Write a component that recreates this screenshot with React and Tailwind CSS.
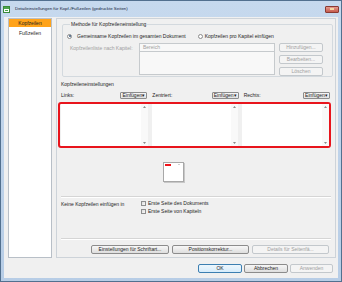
import clsx from 'clsx'

function Btn({ children, className, disabled, focused }) {
  return (
    <div
      className={clsx(
        'flex h-[9px] items-center justify-center rounded-[2px] border',
        disabled && 'border-[#c3c8cc] bg-[#f4f4f4] text-[#a0a0a0]',
        focused && 'border-[#3c7fb1] bg-linear-to-b from-[#eef7fd] to-[#d6ecfb]',
        !disabled && !focused && 'border-[#8c8c8c] bg-linear-to-b from-[#f7f7f7] to-[#dedede]',
        className
      )}
    >
      {children}
    </div>
  )
}

function Arrow({ up }) {
  return (
    <svg width="3" height="2" viewBox="0 0 3 2">
      <path d={up ? 'M0 2 L1.5 0 L3 2 Z' : 'M0 0 L1.5 2 L3 0 Z'} fill="#8a8a8a" />
    </svg>
  )
}

function TextBox() {
  return (
    <div className="flex h-[42px] flex-1 bg-white">
      <div className="flex-1" />
      <div className="flex w-[7px] flex-col items-center justify-between bg-[#f9f9f9] py-[2px]">
        <Arrow up />
        <Arrow />
      </div>
    </div>
  )
}

function ColHead({ label }) {
  return (
    <div className="flex h-[7px] flex-1 items-center">
      <span>{label}</span>
      <div className="ml-auto mr-[1px] flex h-[7px] w-[27px] items-center justify-center rounded-[1px] border border-[#8c8c8c] bg-linear-to-b from-[#f7f7f7] to-[#e2e2e2]">
        Einfügen▾
      </div>
    </div>
  )
}

export default function App() {
  return (
    <div className="flex h-[282px] w-[342px] flex-col overflow-hidden border border-[#52708f] bg-linear-to-b from-[#c6d9ee] to-[#b7cde6] font-['Liberation_Sans',sans-serif] text-[5px] leading-none text-[#1e1e1e]">
      {/* Title bar */}
      <div className="flex h-[16px] items-center pl-[2px] pr-[2px]">
        <svg width="7" height="7" viewBox="0 0 7 7">
          <rect x="0.5" y="0.5" width="6" height="6" fill="#fff" stroke="#3a8a3a" />
          <rect x="1" y="1" width="5" height="2" fill="#4ca64c" />
          <rect x="2" y="4" width="3" height="1" fill="#4ca64c" />
        </svg>
        <span className="ml-[5px] text-[4.4px] text-[#14233a]">Detaileinstellungen für Kopf-/Fußzeilen (gedruckte Seiten)</span>
        <div className="ml-auto flex h-[7px] w-[14px] items-center justify-center rounded-[1px] border border-[#8a3a32] bg-linear-to-b from-[#e49a8f] to-[#c55a4c]">
          <div className="h-[2px] w-[4px] bg-[#f5d7a0]" />
        </div>
      </div>

      {/* Client area */}
      <div className="mx-[3px] mb-[3px] flex flex-1 flex-col bg-[#f0f0f0] pl-[4px] pr-[2px] pt-[1px]">
        <div className="flex h-[240px] gap-[4px]">
          {/* Left list */}
          <div className="w-[44px] border border-[#b8bfc7] bg-white">
            <div className="flex h-[8px] items-center justify-center bg-[#ffa31a]">Kopfzeilen</div>
            <div className="mt-[2px] flex h-[8px] items-center justify-center">Fußzeilen</div>
          </div>

          {/* Panel */}
          <div className="flex w-[280px] flex-col border border-[#cdd3d9] px-[4px]">
            <fieldset className="ml-[1px] mt-[3px] w-[271px] rounded-[2px] border border-[#d3d9de] pl-[4px]">
              <legend className="ml-[3px] px-[1px]">Methode für Kopfzeileneinstellung</legend>
              <div className="mt-[6px] flex h-[6px] items-center">
                <div className="flex h-[5px] w-[5px] items-center justify-center rounded-full border border-[#8c8c8c] bg-white">
                  <div className="h-[2px] w-[2px] rounded-full bg-[#3d5a7a]" />
                </div>
                <span className="ml-[5px]">Gemeinsame Kopfzeilen im gesamten Dokument</span>
                <div className="ml-[12px] h-[5px] w-[5px] rounded-full border border-[#8c8c8c] bg-white" />
                <span className="ml-[2px]">Kopfzeilen pro Kapitel einfügen</span>
              </div>
              <div className="mt-[4px] flex">
                <div className="w-[72px] pl-[3px] pt-[3px] text-[#a0a0a0]">Kopfzeilenliste nach Kapitel:</div>
                <div className="h-[32px] w-[136px] border border-[#c6cacd] bg-[#f8f8f8]">
                  <div className="flex h-[8px] items-center border-b border-[#c6cacd] pl-[3px] text-[#a0a0a0]">Bereich</div>
                </div>
                <div className="ml-[4px] flex w-[44px] flex-col gap-[3px]">
                  <Btn disabled>Hinzufügen...</Btn>
                  <Btn disabled>Bearbeiten...</Btn>
                  <Btn disabled>Löschen</Btn>
                </div>
              </div>
            </fieldset>

            <div className="mt-[5px] flex h-[5px] items-center">Kopfzeileneinstellungen</div>

            <div className="mt-[5px] flex gap-[4px]">
              <ColHead label="Links:" />
              <ColHead label="Zentriert:" />
              <ColHead label="Rechts:" />
            </div>

            <div className="-ml-[3px] mt-[3px] flex w-[273px] gap-[4px] rounded-[3px] border-2 border-[#e8141c] pl-[1px]">
              <TextBox />
              <TextBox />
              <TextBox />
            </div>

            {/* Page preview */}
            <div className="ml-[102px] mt-[14px] h-[20px] w-[21px] border border-[#a8a8a8] bg-white shadow-[1px_1px_0_#c8c8c8]">
              <div className="flex">
                <div className="ml-[1px] mt-[1px] h-[2px] w-[6px] bg-[#f0141c]" />
                <div className="ml-[7px] mt-[1px] h-[1px] w-[2px] bg-[#d0d0d0]" />
              </div>
            </div>

            <div className="mt-[14px] border-t border-[#d5d5d5] shadow-[0_1px_0_#ffffff]" />

            <div className="mt-[4px] flex">
              <div className="w-[80px] pt-[1px]">Keine Kopfzeilen einfügen in</div>
              <div className="flex flex-col gap-[3px]">
                <div className="flex h-[5px] items-center">
                  <div className="h-[5px] w-[5px] border border-[#8e8f8f] bg-linear-to-br from-[#dcdcdc] to-[#fafafa]" />
                  <span className="ml-[2px]">Erste Seite des Dokuments</span>
                </div>
                <div className="flex h-[5px] items-center">
                  <div className="h-[5px] w-[5px] border border-[#8e8f8f] bg-linear-to-br from-[#dcdcdc] to-[#fafafa]" />
                  <span className="ml-[2px]">Erste Seite von Kapiteln</span>
                </div>
              </div>
            </div>

            <div className="mt-[24px] border-t border-[#d5d5d5] shadow-[0_1px_0_#ffffff]" />

            <div className="mt-[6px] flex justify-end gap-[3px] pr-[2px]">
              <Btn className="w-[78px]">Einstellungen für Schriftart...</Btn>
              <Btn className="w-[77px]">Positionskorrektur...</Btn>
              <Btn className="w-[77px]" disabled>Details für Seitenfä...</Btn>
            </div>
          </div>
        </div>

        {/* Dialog buttons */}
        <div className="mr-[3px] mt-[6px] flex justify-end gap-[2px]">
          <Btn className="w-[44px]" focused>OK</Btn>
          <Btn className="w-[44px]">Abbrechen</Btn>
          <Btn className="w-[43px]" disabled>Anwenden</Btn>
        </div>
      </div>
    </div>
  )
}
